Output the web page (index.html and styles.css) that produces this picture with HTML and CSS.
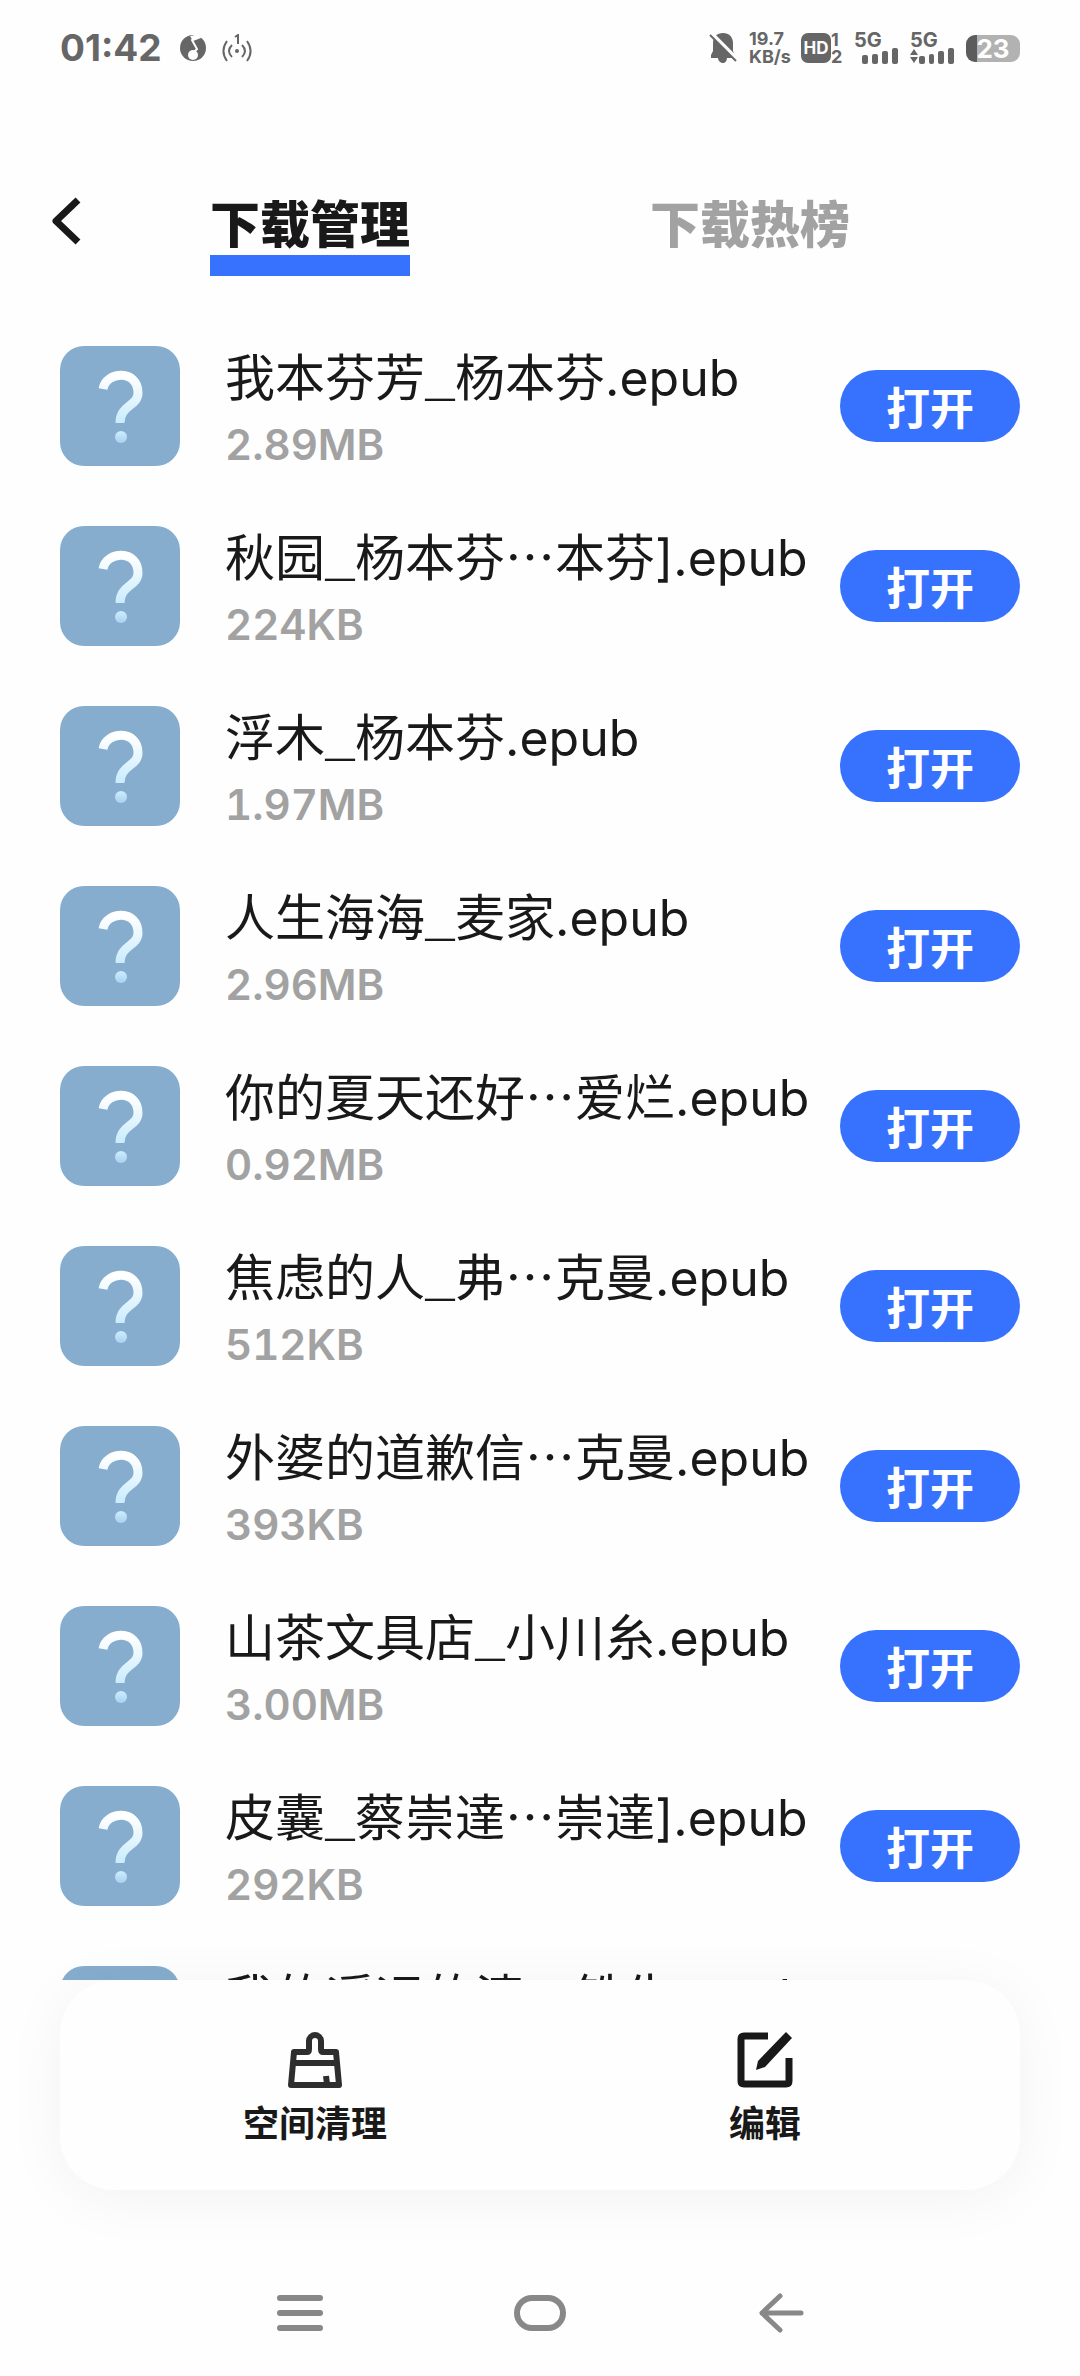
FILE: index.html
```html
<!DOCTYPE html>
<html lang="zh-CN">
<head>
<meta charset="utf-8">
<meta name="viewport" content="width=device-width, initial-scale=1">
<title>下载管理</title>
<link rel="stylesheet" href="styles.css">
</head>
<body>
<svg class="defs" aria-hidden="true">
  <defs>
    <linearGradient id="mark" x1="0" y1="0" x2="0" y2="1">
      <stop offset="0" stop-color="#ffffff"/>
      <stop offset="1" stop-color="#c9ecfd"/>
    </linearGradient>
    <linearGradient id="dot" x1="0" y1="0" x2="0" y2="1">
      <stop offset="0" stop-color="#cdeefd"/>
      <stop offset="1" stop-color="#a9d2f0"/>
    </linearGradient>
    <symbol id="unknown" viewBox="0 0 120 120">
      <path d="M43 43C46 25 78 23 78 47C78 60 60 59 60 77" fill="none" stroke="url(#mark)" stroke-width="9"/>
      <circle cx="61" cy="91" r="6" fill="url(#dot)"/>
    </symbol>
  </defs>
</svg>
<div class="screen">
  <div class="status">
    <div class="status-side">
      <span class="time">01:42</span>
      <svg class="music" width="26" height="28" viewBox="0 0 26 28" aria-hidden="true">
        <circle cx="13" cy="14" r="13" fill="#666"/>
        <path d="M20 1L12 6L17 15L14 18" fill="none" stroke="#fefefe" stroke-width="2"/>
        <path d="M10 2L20 0L21 4L13 7Z" fill="#fefefe"/>
        <ellipse cx="13" cy="21" rx="5" ry="5" fill="#fefefe"/>
      </svg>
      <svg class="hotspot" width="30" height="28" viewBox="0 0 30 28" fill="none" stroke="#666" stroke-width="2" aria-hidden="true">
        <path d="M5 7C0 14 0 20 5 27M10 11C6 15 6 19 10 23M25 7C30 14 30 20 25 27M20 11C24 15 24 19 20 23M13 3L16 1V10"/>
        <circle cx="15" cy="17" r="2" fill="#666" stroke="none"/>
      </svg>
    </div>
    <div class="status-side">
      <svg width="28" height="30" viewBox="0 0 28 30" aria-hidden="true">
        <path d="M14 0C20 0 24 4 24 10V18L27 25H18C18 28 16 30 14 30S9 28 9 25H2V22L4 18V10C4 4 8 0 14 0Z" fill="#666"/>
        <path d="M2 0L28 26" stroke="#fefefe" stroke-width="4"/>
        <path d="M1 2L27 28" stroke="#666" stroke-width="2"/>
      </svg>
      <span class="speed"><span>19.7</span><span>KB/s</span></span>
      <span class="volte"><span class="hd">HD</span><span class="sims"><span>1</span><span>2</span></span></span>
      <span class="signal"><span>5G</span>
        <svg width="36" height="16" viewBox="0 0 36 16" fill="#666" aria-hidden="true"><rect x="0" y="7" width="6" height="9" rx="2"/><rect x="10" y="6" width="6" height="10" rx="2"/><rect x="20" y="3" width="6" height="13" rx="2"/><rect x="30" y="0" width="6" height="16" rx="2"/></svg>
      </span>
      <span class="signal"><span>5G</span>
        <svg width="44" height="16" viewBox="0 0 44 16" fill="#666" aria-hidden="true"><path d="M0 7L4 1L8 7ZM0 9H8L4 15Z"/><rect x="9" y="8" width="6" height="8" rx="2"/><rect x="19" y="6" width="5" height="10" rx="2"/><rect x="28" y="3" width="6" height="13" rx="2"/><rect x="38" y="0" width="6" height="16" rx="2"/></svg>
      </span>
      <span class="battery">23</span>
    </div>
  </div>

  <header class="header">
    <button class="back" type="button" aria-label="返回">
      <svg width="32" height="48" viewBox="0 0 32 48" fill="none" stroke="#191919" stroke-width="7" stroke-linejoin="round" aria-hidden="true"><path d="M28 3L6 24L28 45"/></svg>
    </button>
    <a class="tab tab-active" href="#manage">下载管理</a>
    <a class="tab" href="#hot">下载热榜</a>
  </header>

  <main class="list" id="manage">
    <div class="row"><svg class="cover" aria-hidden="true"><use href="#unknown"/></svg><div class="info"><div class="name">我本芬芳<span class="bar">_</span>杨本芬.epub</div><div class="size">2.89MB</div></div><button class="open" type="button">打开</button></div>
    <div class="row"><svg class="cover" aria-hidden="true"><use href="#unknown"/></svg><div class="info"><div class="name">秋园<span class="bar">_</span>杨本芬⋯本芬].epub</div><div class="size">224KB</div></div><button class="open" type="button">打开</button></div>
    <div class="row"><svg class="cover" aria-hidden="true"><use href="#unknown"/></svg><div class="info"><div class="name">浮木<span class="bar">_</span>杨本芬.epub</div><div class="size">1.97MB</div></div><button class="open" type="button">打开</button></div>
    <div class="row"><svg class="cover" aria-hidden="true"><use href="#unknown"/></svg><div class="info"><div class="name">人生海海<span class="bar">_</span>麦家.epub</div><div class="size">2.96MB</div></div><button class="open" type="button">打开</button></div>
    <div class="row"><svg class="cover" aria-hidden="true"><use href="#unknown"/></svg><div class="info"><div class="name">你的夏天还好⋯爱烂.epub</div><div class="size">0.92MB</div></div><button class="open" type="button">打开</button></div>
    <div class="row"><svg class="cover" aria-hidden="true"><use href="#unknown"/></svg><div class="info"><div class="name">焦虑的人<span class="bar">_</span>弗⋯克曼.epub</div><div class="size">512KB</div></div><button class="open" type="button">打开</button></div>
    <div class="row"><svg class="cover" aria-hidden="true"><use href="#unknown"/></svg><div class="info"><div class="name">外婆的道歉信⋯克曼.epub</div><div class="size">393KB</div></div><button class="open" type="button">打开</button></div>
    <div class="row"><svg class="cover" aria-hidden="true"><use href="#unknown"/></svg><div class="info"><div class="name">山茶文具店<span class="bar">_</span>小川糸.epub</div><div class="size">3.00MB</div></div><button class="open" type="button">打开</button></div>
    <div class="row"><svg class="cover" aria-hidden="true"><use href="#unknown"/></svg><div class="info"><div class="name">皮囊<span class="bar">_</span>蔡崇達⋯崇達].epub</div><div class="size">292KB</div></div><button class="open" type="button">打开</button></div>
    <div class="row"><svg class="cover" aria-hidden="true"><use href="#unknown"/></svg><div class="info"><div class="name">我的遥远的清⋯铁生.epub</div></div></div>
  </main>

  <div class="actions">
    <button class="action" type="button">
      <svg width="60" height="60" viewBox="0 0 60 60" fill="none" stroke="#2e2e2e" stroke-width="6" stroke-linejoin="round" aria-hidden="true">
        <path d="M9 22H22Q24 22 24 19V11A6 6 0 0 1 36 11V19Q36 22 38 22H51L54 55H6Z"/>
        <path d="M8 33H52M41 46L42 54"/>
      </svg>
      <span>空间清理</span>
    </button>
    <button class="action" type="button">
      <svg width="60" height="60" viewBox="0 0 60 60" fill="none" stroke="#191919" stroke-width="7" aria-hidden="true">
        <path d="M33 6H9Q6 6 6 9V51Q6 54 9 54H51Q54 54 54 51V28"/>
        <path d="M51 2L57 8L30 37L21 40L23 31Z" fill="#191919" stroke="none"/>
      </svg>
      <span>编辑</span>
    </button>
  </div>

  <nav class="system">
    <button type="button" aria-label="最近任务"><svg width="52" height="44" viewBox="0 0 52 44" fill="none" stroke="#888" stroke-width="6" stroke-linecap="round" aria-hidden="true"><path d="M6 7H46M6 22H46M6 37H46"/></svg></button>
    <button type="button" aria-label="主页"><svg width="52" height="44" viewBox="0 0 52 44" fill="none" stroke="#888" stroke-width="6" aria-hidden="true"><rect x="3" y="7" width="46" height="30" rx="15"/></svg></button>
    <button type="button" aria-label="返回上一页"><svg width="52" height="44" viewBox="0 0 52 44" fill="none" stroke="#888" stroke-width="5" stroke-linecap="round" stroke-linejoin="round" aria-hidden="true"><path d="M47 22H8M26 5L8 22L26 39"/></svg></button>
  </nav>
</div>
</body>
</html>
```
FILE: styles.css
```css
* { box-sizing: border-box; }

body {
  margin: 0;
  background: #fefefe;
  color: #191919;
  font-family: Inter, "Noto Sans CJK SC", sans-serif;
}

button {
  margin: 0;
  padding: 0;
  border: 0;
  background: none;
  color: inherit;
  font: inherit;
}

svg { flex: none; }

.defs {
  position: absolute;
  width: 0;
  height: 0;
}

.screen {
  display: flex;
  flex-direction: column;
  height: 100vh;
}

/* status bar */
.status {
  display: flex;
  justify-content: space-between;
  height: 96px;
  padding: 0 60px;
  color: #666;
  font-weight: 700;
}

.status-side {
  display: flex;
  align-items: center;
  height: 96px;
  gap: 12px;
}

.time {
  margin-right: 6px;
  font-size: 37px;
  line-height: 40px;
}

.hotspot { margin-left: 4px; }

.speed {
  display: flex;
  flex-direction: column;
  width: 40px;
  font-size: 18px;
  line-height: 18px;
}

.volte {
  display: flex;
  align-items: center;
}

.hd {
  width: 30px;
  border-radius: 7px;
  background: #666;
  color: #fefefe;
  font-size: 17px;
  line-height: 30px;
  text-align: center;
}

.sims {
  display: flex;
  flex-direction: column;
  width: 11px;
  font-size: 18px;
  line-height: 17px;
}

.signal {
  display: flex;
  flex-direction: column;
  align-items: flex-end;
  width: 44px;
  font-size: 20px;
  line-height: 15px;
}

.signal span { align-self: flex-start; }

.battery {
  width: 54px;
  border-radius: 9px;
  background: linear-gradient(to right, #5c5c5c 11px, #b2b2b2 11px);
  color: #fefefe;
  font-size: 26px;
  line-height: 27px;
  text-align: center;
}

/* tabs */
.header {
  display: grid;
  grid-template-columns: 90px 1fr 1fr 110px;
  padding: 97px 0 70px;
}

.back {
  justify-self: end;
  align-self: start;
  margin: 4px 8px 0 0;
}

.tab {
  justify-self: center;
  height: 83px;
  color: #a2a2a2;
  font-family: "Noto Sans CJK SC", sans-serif;
  font-size: 50px;
  font-weight: 900;
  line-height: 56px;
  text-decoration: none;
}

.tab-active {
  border-bottom: 21px solid #3772ff;
  color: #191919;
}

/* downloads */
.list {
  display: flex;
  flex: 1;
  flex-direction: column;
  gap: 60px;
  min-height: 0;
  padding: 0 60px;
  overflow: hidden;
}

.row {
  display: flex;
  flex: none;
  align-items: center;
  height: 120px;
}

.cover {
  width: 120px;
  height: 120px;
  margin-right: 45px;
  border-radius: 24px;
  background: #86adce;
}

.info {
  flex: 1;
  align-self: flex-start;
  min-width: 0;
}

.name {
  font-size: 50px;
  line-height: 64px;
  white-space: nowrap;
}

.bar {
  font-family: "Liberation Mono", monospace;
  line-height: 1;
}

.size {
  margin-top: 10px;
  color: #a2a2a2;
  font-size: 42px;
  font-variant-numeric: tabular-nums;
  font-weight: 600;
  line-height: 50px;
}

.open {
  width: 180px;
  height: 72px;
  border-radius: 36px;
  background: #3772ff;
  color: #fff;
  font-family: "Noto Sans CJK SC", sans-serif;
  font-size: 44px;
  font-weight: 700;
  line-height: 72px;
}

/* bottom card */
.actions {
  position: relative;
  display: grid;
  grid-template-columns: 1fr 1fr;
  margin: 0 60px;
  padding: 50px 30px 45px;
  border-radius: 54px;
  background: #fefefe;
  box-shadow: 0 8px 60px rgba(0, 0, 0, 0.05);
}

.action {
  display: flex;
  flex-direction: column;
  align-items: center;
  gap: 7px;
  font-family: "Noto Sans CJK SC", sans-serif;
  font-size: 36px;
  font-weight: 700;
  line-height: 48px;
}

/* system navigation */
.system {
  display: grid;
  grid-template-columns: repeat(3, 240px);
  justify-content: center;
  height: 186px;
  padding: 60px 0 0;
}

.system button {
  display: flex;
  align-items: center;
  justify-content: center;
}
```
